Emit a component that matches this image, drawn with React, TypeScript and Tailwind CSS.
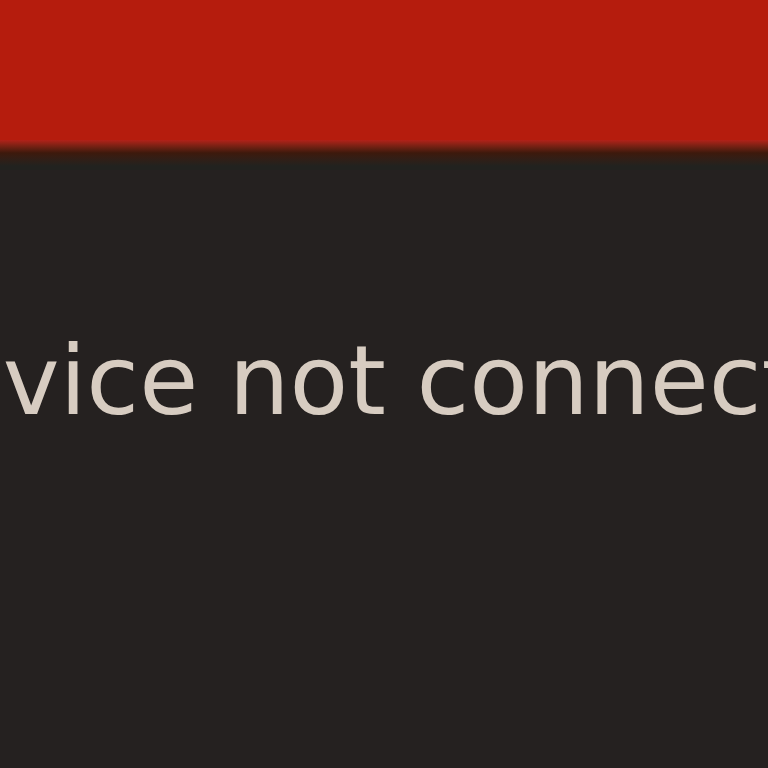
export default function App() {
  return (
    <div className="w-[768px] h-[768px] overflow-hidden bg-[#252120] flex flex-col">
      <div className="h-[140px] bg-[#b51c0d] shrink-0" />
      <div className="h-[26px] shrink-0 bg-gradient-to-b from-[#b22119] via-[#3d190c] to-[#22221f]" />
      <div className="h-[4px] shrink-0 bg-[#22221f]" />
      <div className="flex-1 flex flex-col">
        <div className="h-[163px]" />
        <div
          className="flex justify-center whitespace-nowrap pl-[21px] text-[96px] leading-none text-[#d7ccc1]"
          style={{ fontFamily: '"DejaVu Sans", sans-serif' }}
        >
          Device not connected
        </div>
      </div>
    </div>
  );
}
